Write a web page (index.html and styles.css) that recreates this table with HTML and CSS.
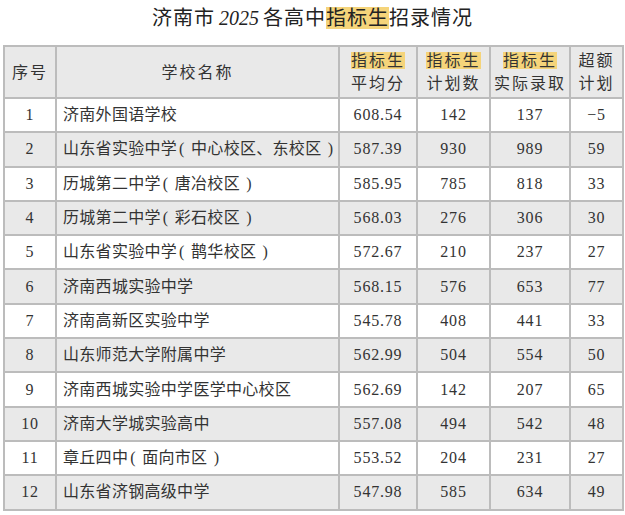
FILE: index.html
```html
<!DOCTYPE html>
<html lang="zh">
<head>
<meta charset="utf-8">
<link rel="stylesheet" href="styles.css">
</head>
<body>
<div class="page">
  <h1 class="title">济南市<span class="num">2025</span>各高中<span class="hl">指标生</span>招录情况</h1>
  <table class="grid">
    <colgroup>
      <col class="c-no"><col class="c-name"><col class="c-avg"><col class="c-plan"><col class="c-real"><col class="c-extra">
    </colgroup>
    <thead>
      <tr>
        <th>序号</th>
        <th>学校名称</th>
        <th><span class="hl">指标生</span><br>平均分</th>
        <th><span class="hl">指标生</span><br>计划数</th>
        <th><span class="hl">指标生</span><br>实际录取</th>
        <th>超额<br>计划</th>
      </tr>
    </thead>
    <tbody>
      <tr><td>1</td><td class="name">济南外国语学校</td><td>608.54</td><td>142</td><td>137</td><td>−5</td></tr>
      <tr><td>2</td><td class="name">山东省实验中学<span class="p">(</span> 中心校区、东校区 <span class="p">)</span></td><td>587.39</td><td>930</td><td>989</td><td>59</td></tr>
      <tr><td>3</td><td class="name">历城第二中学<span class="p">(</span> 唐冶校区 <span class="p">)</span></td><td>585.95</td><td>785</td><td>818</td><td>33</td></tr>
      <tr><td>4</td><td class="name">历城第二中学<span class="p">(</span> 彩石校区 <span class="p">)</span></td><td>568.03</td><td>276</td><td>306</td><td>30</td></tr>
      <tr><td>5</td><td class="name">山东省实验中学<span class="p">(</span> 鹊华校区 <span class="p">)</span></td><td>572.67</td><td>210</td><td>237</td><td>27</td></tr>
      <tr><td>6</td><td class="name">济南西城实验中学</td><td>568.15</td><td>576</td><td>653</td><td>77</td></tr>
      <tr><td>7</td><td class="name">济南高新区实验中学</td><td>545.78</td><td>408</td><td>441</td><td>33</td></tr>
      <tr><td>8</td><td class="name">山东师范大学附属中学</td><td>562.99</td><td>504</td><td>554</td><td>50</td></tr>
      <tr><td>9</td><td class="name">济南西城实验中学医学中心校区</td><td>562.69</td><td>142</td><td>207</td><td>65</td></tr>
      <tr><td>10</td><td class="name">济南大学城实验高中</td><td>557.08</td><td>494</td><td>542</td><td>48</td></tr>
      <tr><td>11</td><td class="name">章丘四中<span class="p">(</span> 面向市区 <span class="p">)</span></td><td>553.52</td><td>204</td><td>231</td><td>27</td></tr>
      <tr><td>12</td><td class="name">山东省济钢高级中学</td><td>547.98</td><td>585</td><td>634</td><td>49</td></tr>
    </tbody>
  </table>
</div>
</body>
</html>
```

FILE: styles.css
```css
html, body {
  margin: 0;
  padding: 0;
  background: #ffffff;
}

.page {
  width: 625px;
  padding: 6px 0 0 3px;
  box-sizing: border-box;
  font-family: "Liberation Serif", "Noto Sans CJK SC", serif;
  color: #333333;
}

.title {
  margin: 0 0 12px 0;
  height: 27px;
  line-height: 24px;
  font-size: 20px;
  font-weight: normal;
  text-align: center;
  color: #222222;
  letter-spacing: 1px;
  padding-right: 3px;
}

.title .num {
  font-style: italic;
  margin: 0 4px;
  letter-spacing: 0;
}

.hl {
  background: #f5d47a;
}

.grid {
  border-collapse: collapse;
  table-layout: fixed;
  width: 619px;
  border: 2px solid #b9b9b9;
  font-size: 16px;
}

.c-no { width: 52px; }
.c-name { width: 283px; }
.c-avg { width: 78px; }
.c-plan { width: 73px; }
.c-real { width: 80px; }
.c-extra { width: 53px; }

.grid th,
.grid td {
  border: 2px solid #bcbcbc;
  text-align: center;
  padding: 0;
  font-weight: normal;
  letter-spacing: 0.8px;
  white-space: nowrap;
  overflow: hidden;
}

.grid th {
  background: #e9e9e9;
  height: 50px;
  line-height: 23px;
  letter-spacing: 2px;
}

.grid td {
  height: 32.3px;
  line-height: 20px;
}

.grid tbody tr:nth-child(even) td {
  background: #e9e9e9;
}

.grid td.name {
  text-align: left;
  padding-left: 6px;
  letter-spacing: 0.3px;
}

.grid td.name .p {
  font-family: "Liberation Serif", serif;
  margin: 0 2px;
}
```
